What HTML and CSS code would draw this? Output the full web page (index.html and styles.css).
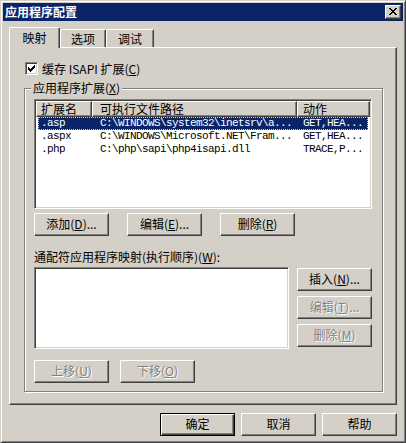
FILE: index.html
```html
<!DOCTYPE html>
<html lang="zh-CN">
<head>
<meta charset="utf-8">
<title>应用程序配置</title>
<link rel="stylesheet" href="styles.css">
</head>
<body>
<div class="window">
  <div class="titlebar">
    <span class="title">应用程序配置</span>
    <span class="close">
      <svg width="8" height="7" viewBox="0 0 8 7" shape-rendering="crispEdges"><path fill="#000" d="M0 0h2v1H0zM6 0h2v1H6zM1 1h2v1H1zM5 1h2v1H5zM2 2h4v1H2zM3 3h2v1H3zM2 4h4v1H2zM1 5h2v1H1zM5 5h2v1H5zM0 6h2v1H0zM6 6h2v1H6z"/></svg>
    </span>
  </div>
  <div class="client">
    <div class="tabs">
      <div class="tab active">映射</div>
      <div class="tab t2">选项</div>
      <div class="tab t3">调试</div>
    </div>
    <div class="page">
      <div class="check">
        <span class="cbox"><svg width="7" height="7" viewBox="0 0 7 7" shape-rendering="crispEdges"><path fill="#000" d="M0 2h1v3H0zM1 3h1v3H1zM2 4h1v3H2zM3 3h1v3H3zM4 2h1v3H4zM5 1h1v3H5zM6 0h1v3H6z"/></svg></span>
        <span class="clabel">缓存 ISAPI 扩展(<u>C</u>)</span>
      </div>
      <fieldset class="group">
        <legend>应用程序扩展(<u>X</u>)</legend>
        <div class="listview sunken">
          <div class="lvhead">
            <div class="hc c1">扩展名</div>
            <div class="hc c2">可执行文件路径</div>
            <div class="hc c3">动作</div>
          </div>
          <div class="row selected">
            <span class="c1">.asp</span><span class="c2">C:\WINDOWS\system32\inetsrv\a...</span><span class="c3">GET,HEA...</span>
          </div>
          <div class="row">
            <span class="c1">.aspx</span><span class="c2">C:\WINDOWS\Microsoft.NET\Fram...</span><span class="c3">GET,HEA...</span>
          </div>
          <div class="row">
            <span class="c1">.php</span><span class="c2">C:\php\sapi\php4isapi.dll</span><span class="c3">TRACE,P...</span>
          </div>
        </div>
        <div class="btnrow">
          <div class="btn">添加(<u>D</u>)...</div>
          <div class="btn">编辑(<u>E</u>)...</div>
          <div class="btn">删除(<u>R</u>)</div>
        </div>
        <div class="wlabel">通配符应用程序映射(执行顺序)(<u>W</u>):</div>
        <div class="wild">
          <div class="listbox sunken"></div>
          <div class="side">
            <div class="btn">插入(<u>N</u>)...</div>
            <div class="btn disabled">编辑(<u>T</u>)...</div>
            <div class="btn disabled">删除(<u>M</u>)</div>
          </div>
        </div>
        <div class="moverow">
          <div class="btn disabled">上移(<u>U</u>)</div>
          <div class="btn disabled">下移(<u>O</u>)</div>
        </div>
      </fieldset>
    </div>
    <div class="footer">
      <div class="btn default">确定</div>
      <div class="btn">取消</div>
      <div class="btn">帮助</div>
    </div>
  </div>
</div>
</body>
</html>
```
FILE: styles.css
```css
* { box-sizing: border-box; }
html, body { margin: 0; padding: 0; }
body {
  background: #D4D0C8;
  font-family: "Noto Sans CJK SC", "Liberation Sans", sans-serif;
  font-size: 12px;
  color: #000;
}
u { text-decoration: underline; text-underline-offset: 1px; }

.window {
  width: 406px;
  height: 443px;
  background: #D4D0C8;
  border: 1px solid;
  border-color: #D4D0C8 #404040 #404040 #D4D0C8;
  box-shadow: inset 1px 1px #fff, inset -1px -1px #808080;
  padding: 2px;
  display: flex;
  flex-direction: column;
}

.titlebar {
  height: 18px;
  background: #0A246A;
  display: flex;
  align-items: center;
  justify-content: space-between;
  padding: 0 2px;
}
.title {
  color: #fff;
  font-weight: bold;
  line-height: 18px;
  font-size: 12px;
}
.close {
  width: 16px;
  height: 14px;
  background: #D4D0C8;
  border: 1px solid;
  border-color: #fff #404040 #404040 #fff;
  box-shadow: inset -1px -1px #808080;
  display: flex;
  align-items: center;
  justify-content: center;
  padding: 0 1px 1px 0;
}
.close svg { display: block; }

.client {
  flex: 1;
  padding: 6px 6px 0 6px;
}

.tabs {
  display: flex;
  align-items: flex-start;
  height: 21px;
  margin-bottom: -1px;
  position: relative;
  z-index: 1;
}
.tab {
  height: 18px;
  margin-top: 2px;
  background: #D4D0C8;
  border-top: 1px solid #fff;
  border-left: 1px solid #fff;
  border-right: 1px solid #404040;
  box-shadow: inset -1px 0 #808080;
  border-radius: 2px 2px 0 0;
  text-align: center;
  line-height: 17px;
}
.tab.active {
  width: 51px;
  height: 21px;
  margin-top: 0;
  line-height: 20px;
}
.t2 { width: 46px; }
.t3 { width: 48px; }

.page {
  height: 358px;
  border: 1px solid;
  border-color: #fff #404040 #404040 #fff;
  box-shadow: inset -1px -1px #808080;
}

.check {
  display: flex;
  align-items: center;
  height: 13px;
  margin: 14px 0 0 15px;
}
.cbox {
  width: 13px;
  height: 13px;
  background: #fff;
  border: 1px solid;
  border-color: #808080 #fff #fff #808080;
  box-shadow: inset 1px 1px #404040, inset -1px -1px #D4D0C8;
  display: flex;
  align-items: center;
  justify-content: center;
}
.cbox svg { display: block; }
.clabel { margin-left: 4px; line-height: 13px; }

.group {
  margin: 7px 0 0 14px;
  padding: 0 0 8px 0;
  width: 359px;
  min-inline-size: 0;
  border: 1px solid #808080;
  box-shadow: inset 1px 1px #fff, 1px 1px 0 #fff;
}
.group legend {
  margin-left: 6px;
  padding: 0 2px;
  line-height: 12px;
  background: #D4D0C8;
}

.sunken {
  background: #fff;
  border: 1px solid;
  border-color: #808080 #fff #fff #808080;
  box-shadow: inset 1px 1px #404040, inset -1px -1px #D4D0C8;
  padding: 1px;
}

.listview {
  width: 338px;
  height: 110px;
  margin: 5px 0 0 9px;
}
.lvhead {
  display: flex;
  height: 16px;
}
.hc {
  background: #D4D0C8;
  border: 1px solid;
  border-color: #fff #404040 #404040 #fff;
  box-shadow: inset -1px -1px #808080;
  line-height: 14px;
  white-space: nowrap;
  overflow: hidden;
}
.hc.c1 { width: 56px; padding-left: 4px; }
.hc.c2 { width: 205px; padding-left: 7px; }
.hc.c3 { width: 73px; padding-left: 5px; }

.row {
  display: flex;
  height: 13px;
  margin: 0 2px 0 2px;
  font-family: "Liberation Mono", "DejaVu Sans Mono", monospace;
  font-size: 11px;
  letter-spacing: -0.6px;
  line-height: 13px;
  white-space: pre;
}
.row span { overflow: hidden; }
.row .c1 { width: 54px; padding-left: 3px; }
.row .c2 { width: 205px; padding-left: 8px; }
.row .c3 { width: 71px; padding-left: 6px; }
.row.selected {
  background: #0A246A;
  color: #fff;
  outline: 1px dotted #D4D0C8;
  outline-offset: -1px;
}

.btn {
  width: 75px;
  height: 23px;
  background: #D4D0C8;
  border: 1px solid;
  border-color: #fff #404040 #404040 #fff;
  box-shadow: inset -1px -1px #808080;
  text-align: center;
  line-height: 20px;
  white-space: nowrap;
}
.btn.disabled {
  color: #808080;
  text-shadow: 1px 1px 0 #fff;
}
.btn.default {
  border-color: #000;
  box-shadow: inset 1px 1px #fff, inset -1px -1px #404040, inset -2px -2px #808080;
}

.btnrow {
  display: flex;
  gap: 18px;
  margin: 4px 0 0 9px;
}
.wlabel {
  margin: 14px 0 0 9px;
  line-height: 14px;
  white-space: nowrap;
}
.wild {
  display: flex;
  gap: 8px;
  margin: 3px 0 0 9px;
}
.listbox {
  width: 255px;
  height: 82px;
}
.side {
  display: flex;
  flex-direction: column;
  gap: 5px;
  margin-top: 1px;
}
.moverow {
  display: flex;
  gap: 11px;
  margin: 11px 0 0 9px;
}

.footer {
  display: flex;
  justify-content: flex-end;
  gap: 6px;
  margin-top: 8px;
}
```
